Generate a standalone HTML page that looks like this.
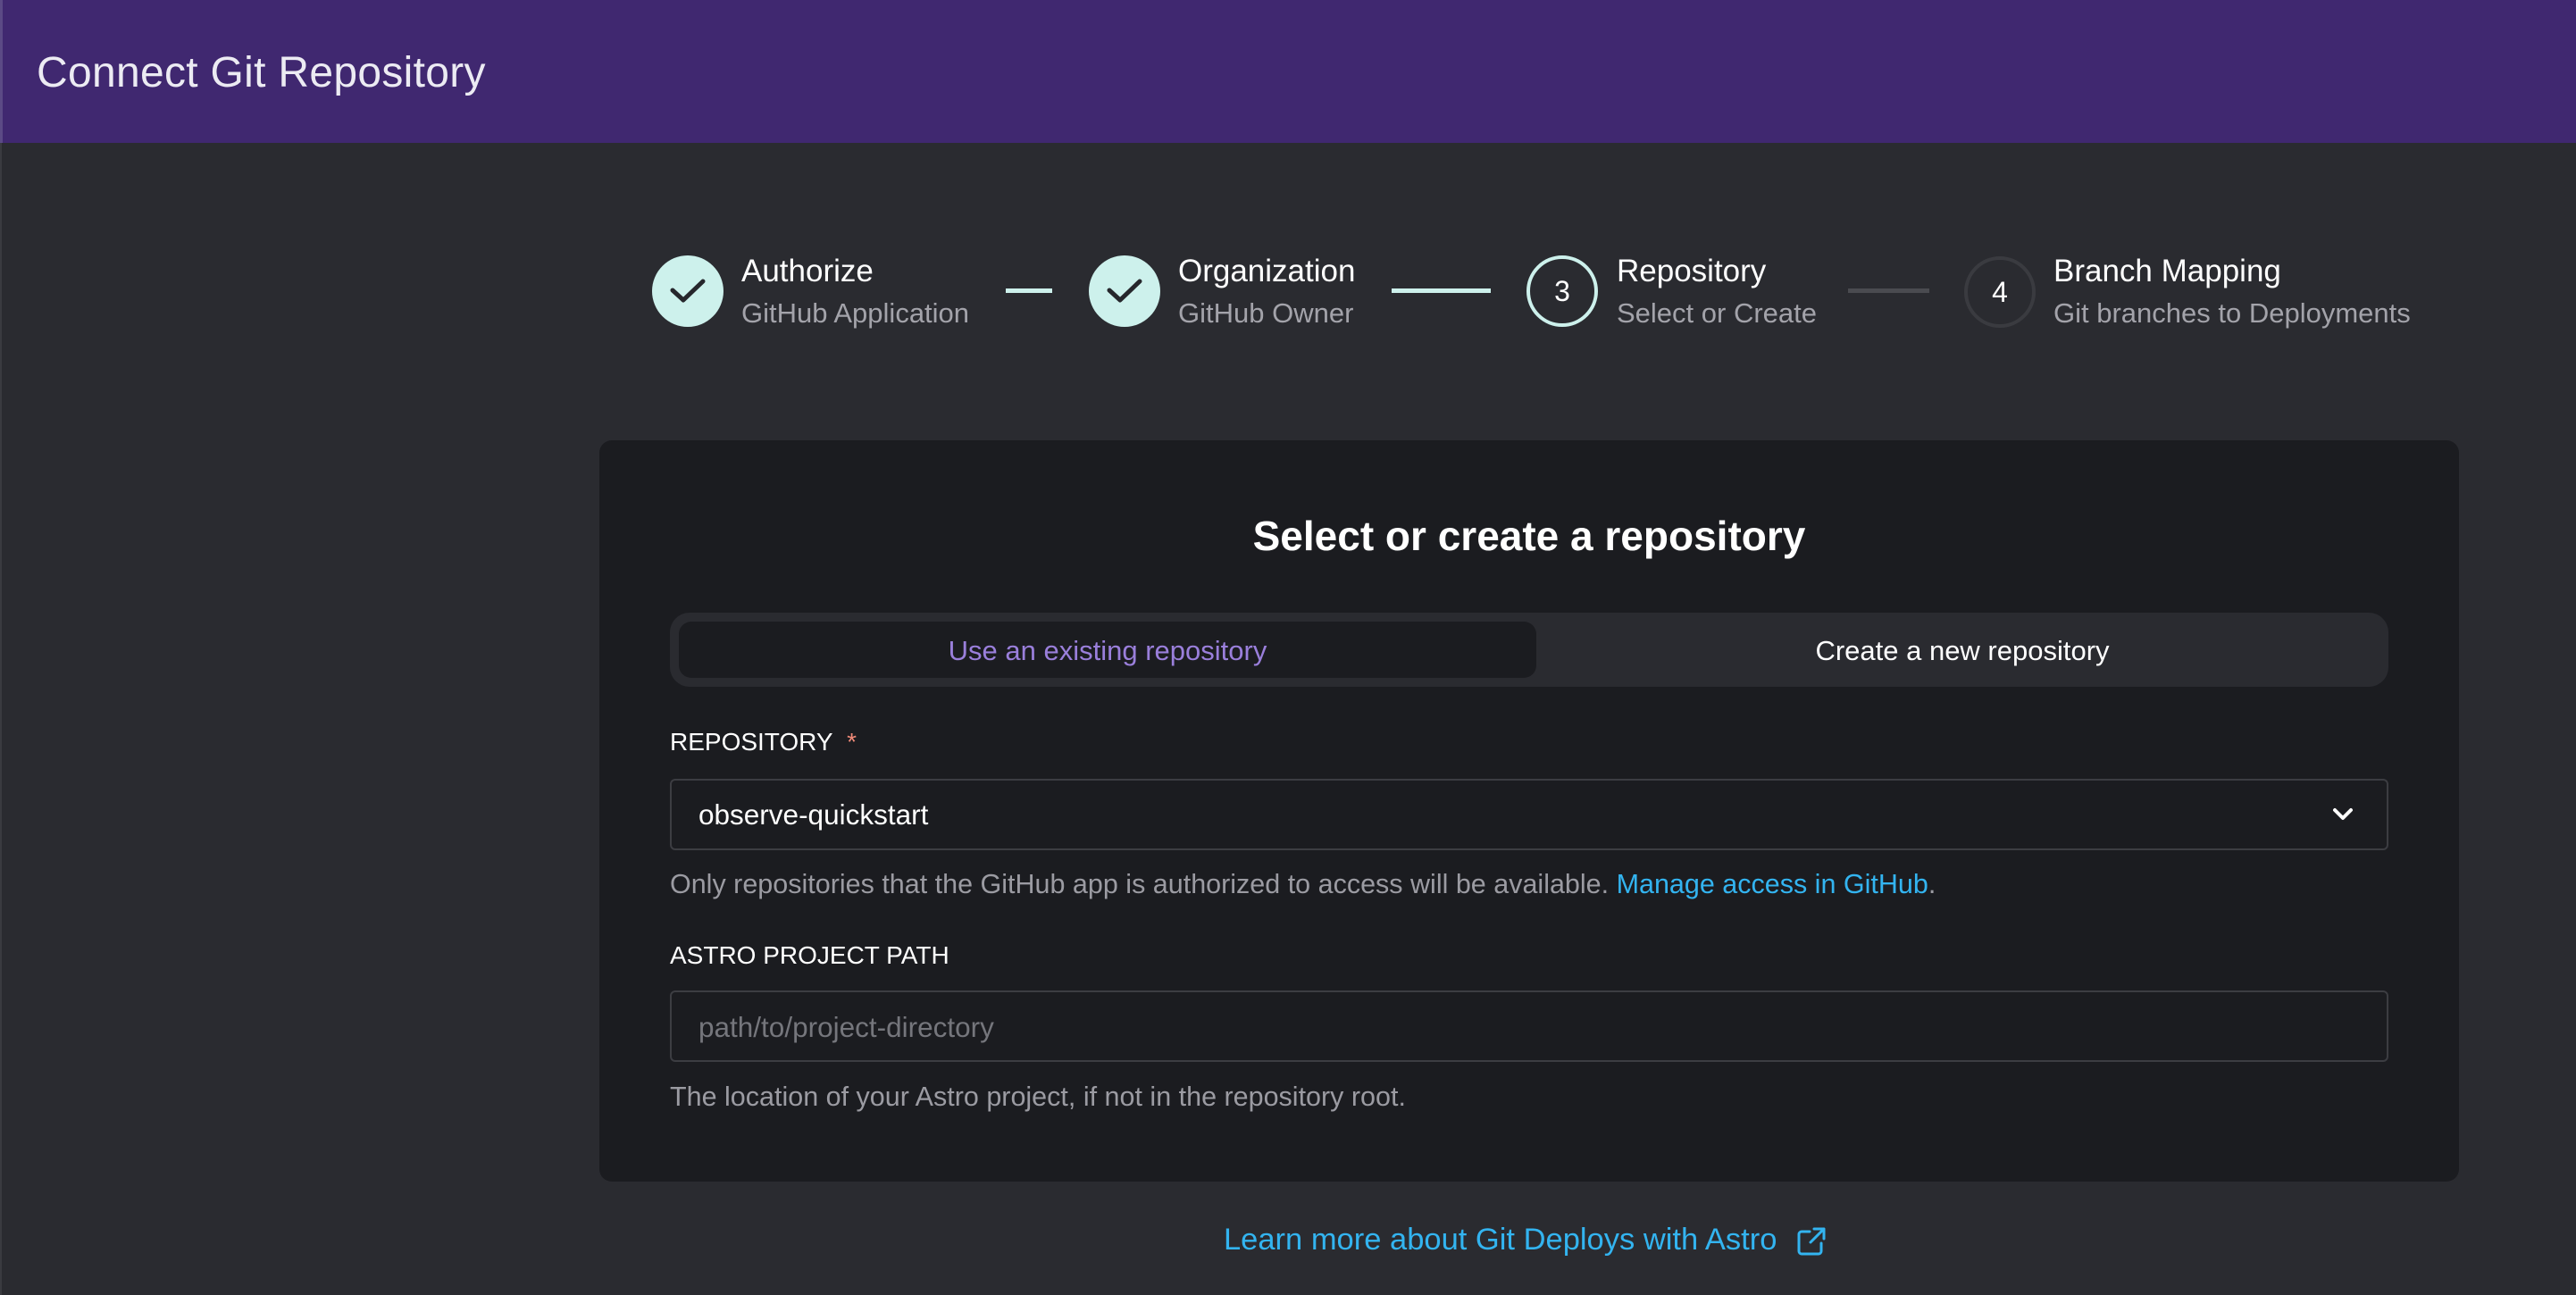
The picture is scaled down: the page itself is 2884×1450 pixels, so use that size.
<!DOCTYPE html>
<html><head><meta charset="utf-8"><style>
*{margin:0;padding:0;box-sizing:border-box}
html,body{width:2884px;height:1450px;overflow:hidden;background:#2a2b30;font-family:"Liberation Sans",sans-serif;}
.a{position:absolute;white-space:nowrap}
.hdr{left:0;top:0;width:2884px;height:160px;background:#402870;border-left:3px solid #5b4a85}
.hdr h1{position:absolute;left:38px;top:54px;font-size:48px;font-weight:500;color:#ecebf3;letter-spacing:0.3px}
.lb{position:absolute;left:0;top:160px;width:2px;height:1290px;background:#3a3b40}
.circ{width:80px;height:80px;border-radius:50%;display:flex;align-items:center;justify-content:center;font-size:32px;color:#fff}
.done{background:#cdf1ec}
.st{font-size:35px;color:#fff;font-weight:500}
.ss{font-size:31px;color:#a3a3aa}
.line{height:5px;top:323px}
.card{left:671px;top:493px;width:2082px;height:830px;background:#1b1c20;border-radius:14px}
.lbl{font-size:28px;color:#fff;font-weight:500}
.help{font-size:30.5px;color:#9b9ba2}
.box{border:2px solid #3c3d42;border-radius:6px;background:#1b1c20}
</style></head><body>
<div class="a hdr"><h1>Connect Git Repository</h1></div>
<div class="lb"></div>

<div class="a circ done" style="left:730px;top:286px"><svg width="80" height="80"><path d="M23 39 L35 50 L57 29" fill="none" stroke="#26272c" stroke-width="5" stroke-linecap="round" stroke-linejoin="round"/></svg></div>
<div class="a st" style="left:830px;top:284px">Authorize</div>
<div class="a ss" style="left:830px;top:333px">GitHub Application</div>
<div class="a line" style="left:1126px;width:52px;background:#cdf1ec"></div>

<div class="a circ done" style="left:1219px;top:286px"><svg width="80" height="80"><path d="M23 39 L35 50 L57 29" fill="none" stroke="#26272c" stroke-width="5" stroke-linecap="round" stroke-linejoin="round"/></svg></div>
<div class="a st" style="left:1319px;top:284px">Organization</div>
<div class="a ss" style="left:1319px;top:333px">GitHub Owner</div>
<div class="a line" style="left:1558px;width:111px;background:#cdf1ec"></div>

<div class="a circ" style="left:1709px;top:286px;border:4px solid #cdf1ec">3</div>
<div class="a st" style="left:1810px;top:284px">Repository</div>
<div class="a ss" style="left:1810px;top:333px">Select or Create</div>
<div class="a line" style="left:2069px;width:91px;background:#4a4b50"></div>

<div class="a circ" style="left:2199px;top:287px;border:4px solid #3a3b40">4</div>
<div class="a st" style="left:2299px;top:284px">Branch Mapping</div>
<div class="a ss" style="left:2299px;top:333px">Git branches to Deployments</div>

<div class="a card"></div>
<div class="a" style="left:671px;width:2082px;top:573px;text-align:center;font-size:46px;font-weight:600;color:#fff">Select or create a repository</div>

<div class="a" style="left:750px;top:686px;width:1924px;height:83px;background:#2a2b30;border-radius:22px"></div>
<div class="a" style="left:760px;top:696px;width:960px;height:63px;background:#1b1c20;border-radius:14px;display:flex;align-items:center;justify-content:center;font-size:31px;color:#9a7fdb;font-weight:500;padding-top:3px">Use an existing repository</div>
<div class="a" style="left:1720px;top:696px;width:954px;height:63px;display:flex;align-items:center;justify-content:center;font-size:31px;color:#fff;font-weight:500;padding-top:3px">Create a new repository</div>

<div class="a lbl" style="left:750px;top:815px">REPOSITORY&nbsp; <span style="color:#f08a78">*</span></div>
<div class="a box" style="left:750px;top:872px;width:1924px;height:80px"></div>
<div class="a" style="left:782px;top:894px;font-size:31.5px;color:#fff">observe-quickstart</div>
<svg class="a" style="left:2610px;top:902px" width="26" height="20"><path d="M4 5 L13 14 L22 5" fill="none" stroke="#fff" stroke-width="4" stroke-linecap="round" stroke-linejoin="round"/></svg>
<div class="a help" style="left:750px;top:973px">Only repositories that the GitHub app is authorized to access will be available. <span style="color:#33b4f0">Manage access in GitHub</span>.</div>

<div class="a lbl" style="left:750px;top:1054px">ASTRO PROJECT PATH</div>
<div class="a box" style="left:750px;top:1109px;width:1924px;height:80px"></div>
<div class="a" style="left:782px;top:1132px;font-size:31.5px;color:#75767c">path/to/project-directory</div>
<div class="a help" style="left:750px;top:1211px">The location of your Astro project, if not in the repository root.</div>

<div class="a" style="left:1370px;top:1369px;font-size:34.5px;color:#33b4f0">Learn more about Git Deploys with Astro</div>
<svg class="a" style="left:2011px;top:1373px" width="34" height="34"><path d="M15 6 H6 a3 3 0 0 0 -3 3 V28 a3 3 0 0 0 3 3 H25 a3 3 0 0 0 3 -3 V19 M20 3 H31 V14 M31 3 L16 18" fill="none" stroke="#33b4f0" stroke-width="3" stroke-linecap="round" stroke-linejoin="round"/></svg>
</body></html>
